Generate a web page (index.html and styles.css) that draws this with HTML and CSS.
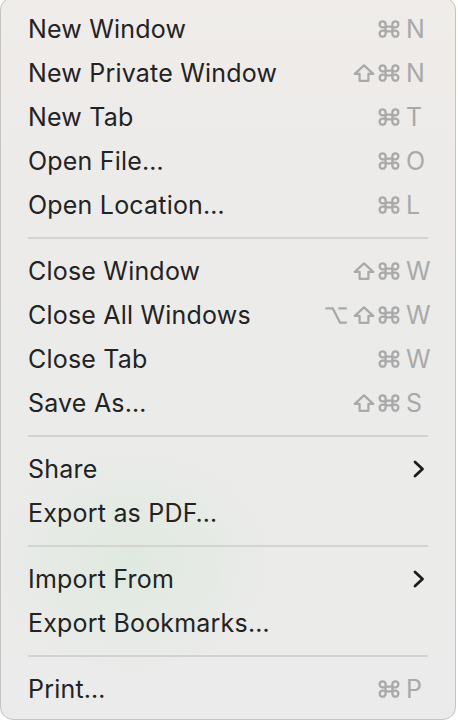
FILE: index.html
```html
<!DOCTYPE html>
<html lang="en">
<head>
<meta charset="utf-8">
<title>File</title>
<link rel="stylesheet" href="styles.css">
</head>
<body>
<svg width="0" height="0" class="defs" aria-hidden="true">
  <defs>
    <symbol id="cmd" viewBox="0 0 22 18">
      <path d="M7.6 6.6 H14.4 V11.4 H7.6 Z M7.6 6.6 V4.3 A3 3 0 1 0 4.6 7.3 H7.6 M14.4 6.6 V4.3 A3 3 0 1 1 17.4 7.3 H14.4 M7.6 11.4 V13.7 A3 3 0 1 1 4.6 10.7 H7.6 M14.4 11.4 V13.7 A3 3 0 1 0 17.4 10.7 H14.4" fill="none" stroke="currentColor" stroke-width="2.3"/>
    </symbol>
    <symbol id="shift" viewBox="0 0 22 18">
      <path d="M11 1.4 L20.2 9.9 H15.4 V16.8 H6.6 V9.9 H1.8 Z" fill="none" stroke="currentColor" stroke-width="2.2" stroke-linejoin="round"/>
    </symbol>
    <symbol id="opt" viewBox="0 0 22 18">
      <path d="M0.5 2.4 H7.8 L15 16.6 H21.8 M13.4 2.4 H21.8" fill="none" stroke="currentColor" stroke-width="2.2"/>
    </symbol>
  </defs>
</svg>

<div class="menu">
  <div class="item"><span class="label">New Window</span><span class="keys"><span class="mods"><svg class="mod"><use href="#cmd"/></svg></span><span class="key">N</span></span></div>
  <div class="item"><span class="label">New Private Window</span><span class="keys"><span class="mods"><svg class="mod"><use href="#shift"/></svg><svg class="mod"><use href="#cmd"/></svg></span><span class="key">N</span></span></div>
  <div class="item"><span class="label">New Tab</span><span class="keys"><span class="mods"><svg class="mod"><use href="#cmd"/></svg></span><span class="key">T</span></span></div>
  <div class="item"><span class="label">Open File…</span><span class="keys"><span class="mods"><svg class="mod"><use href="#cmd"/></svg></span><span class="key">O</span></span></div>
  <div class="item"><span class="label">Open Location…</span><span class="keys"><span class="mods"><svg class="mod"><use href="#cmd"/></svg></span><span class="key">L</span></span></div>
  <div class="sep"></div>
  <div class="item"><span class="label">Close Window</span><span class="keys"><span class="mods"><svg class="mod"><use href="#shift"/></svg><svg class="mod"><use href="#cmd"/></svg></span><span class="key">W</span></span></div>
  <div class="item"><span class="label">Close All Windows</span><span class="keys"><span class="mods"><svg class="mod opt"><use href="#opt"/></svg><svg class="mod"><use href="#shift"/></svg><svg class="mod"><use href="#cmd"/></svg></span><span class="key">W</span></span></div>
  <div class="item"><span class="label">Close Tab</span><span class="keys"><span class="mods"><svg class="mod"><use href="#cmd"/></svg></span><span class="key">W</span></span></div>
  <div class="item"><span class="label">Save As…</span><span class="keys"><span class="mods"><svg class="mod"><use href="#shift"/></svg><svg class="mod"><use href="#cmd"/></svg></span><span class="key">S</span></span></div>
  <div class="sep"></div>
  <div class="item"><span class="label">Share</span><svg class="chev" viewBox="0 0 12 18"><path d="M2 2 L9.5 9 L2 16" fill="none" stroke="currentColor" stroke-width="2.8" stroke-linecap="round" stroke-linejoin="round"/></svg></div>
  <div class="item"><span class="label">Export as PDF…</span></div>
  <div class="sep"></div>
  <div class="item"><span class="label">Import From</span><svg class="chev" viewBox="0 0 12 18"><path d="M2 2 L9.5 9 L2 16" fill="none" stroke="currentColor" stroke-width="2.8" stroke-linecap="round" stroke-linejoin="round"/></svg></div>
  <div class="item"><span class="label">Export Bookmarks…</span></div>
  <div class="sep"></div>
  <div class="item"><span class="label">Print…</span><span class="keys"><span class="mods"><svg class="mod"><use href="#cmd"/></svg></span><span class="key">P</span></span></div>
</div>
</body>
</html>
```

FILE: styles.css
```css
html, body {
  margin: 0;
  padding: 0;
  background: #ffffff;
  width: 458px;
  height: 722px;
  overflow: hidden;
}

.defs {
  position: absolute;
  width: 0;
  height: 0;
}

.menu {
  box-sizing: border-box;
  width: 456px;
  margin-top: -3px;
  padding: 9px 0 8px 0;
  border: 1px solid #c4c4c4;
  border-radius: 13px;
  background:
    radial-gradient(ellipse 150px 120px at 130px 565px, rgba(214, 232, 214, 0.55), rgba(214, 232, 214, 0) 100%),
    linear-gradient(180deg, #efece9 0%, #ecebea 35%, #ebebeb 100%);
  font-family: Inter, "Liberation Sans", sans-serif;
  font-size: 25px;
  letter-spacing: 0.2px;
  color: #232323;
}

.item {
  height: 44px;
  display: flex;
  align-items: center;
  justify-content: space-between;
  padding: 0 27px 0 27px;
}

.label {
  white-space: nowrap;
}

.keys {
  display: flex;
  align-items: center;
  color: #a9a9a9;
}

.mods {
  display: flex;
  align-items: center;
  gap: 3px;
  margin-right: 6px;
}

.mod {
  width: 22px;
  height: 18px;
  display: block;
}

.mod.opt {
  margin-right: 3px;
}

.key {
  width: 22px;
  text-align: left;
}

.chev {
  width: 12px;
  height: 18px;
  margin-right: 3px;
  color: #1c1c1c;
}

.sep {
  height: 2px;
  margin: 10px 27px 10px 27px;
  background: #d3d3d3;
}
```
